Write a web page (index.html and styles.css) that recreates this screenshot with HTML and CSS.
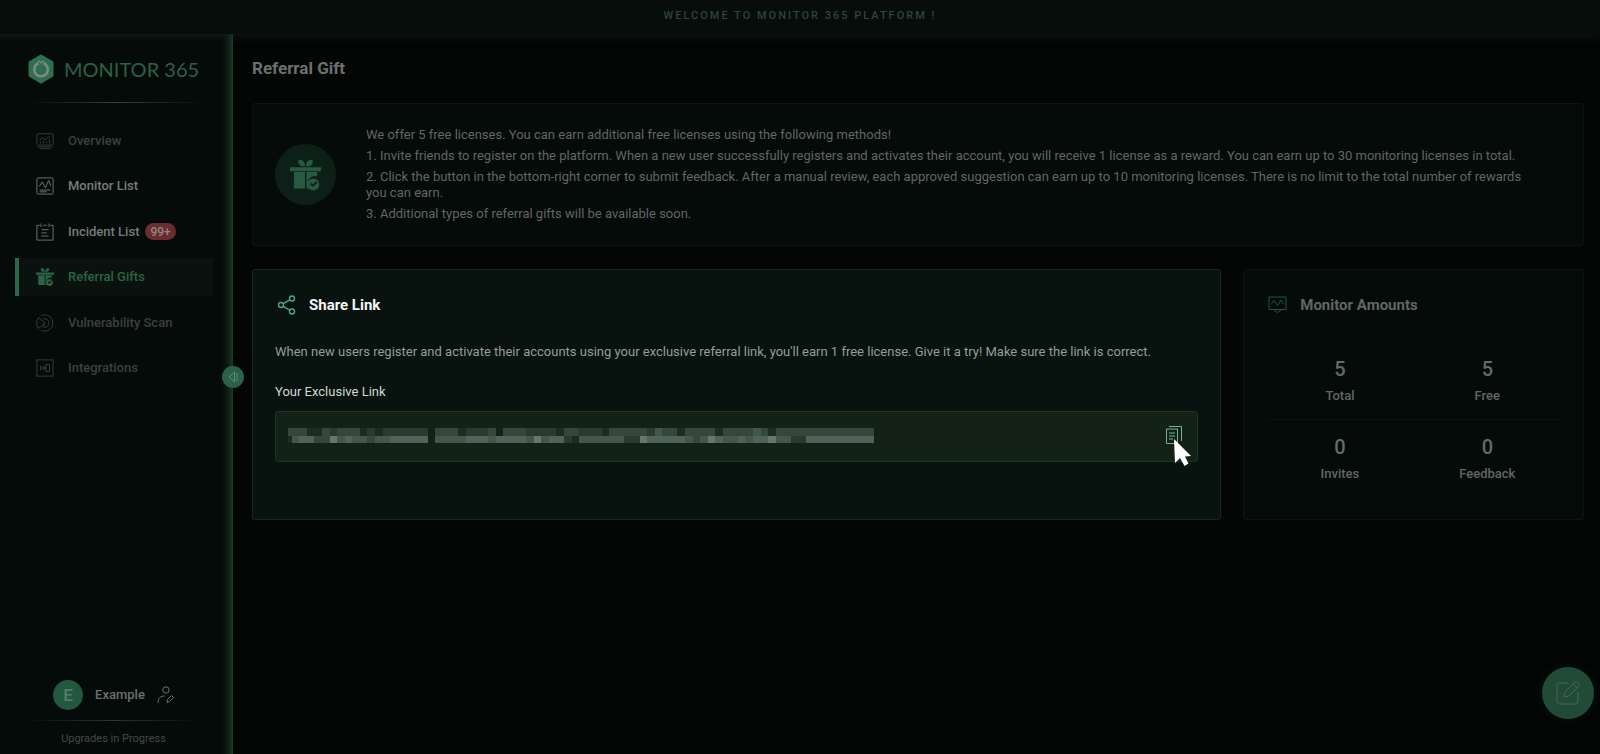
FILE: index.html
```
<!DOCTYPE html>
<html lang="en">
	<head>
		<meta charset="utf-8">
		<title>Monitor 365 - Referral Gift</title>
		<link rel="stylesheet" href="styles.css">
	</head>
	<body>
		<!-- shared icon shapes -->
		<svg class="defs" aria-hidden="true">
			<symbol id="gift" viewBox="0 0 32 32">
				<path d="M15.500 7C11 7.500 8 5 8.500 1c4-1.500 7 1 7 6zM16.500 7C21 7.500 24 5 23.500 1c-4-1.500-7 1-7 6z"/>
				<path d="M0 8h32v4H0zM4 13h11.500v17H4zM17 13h11v4.500a7 7 0 0 0-9 9V30h-2z"/>
				<path fill-rule="evenodd" d="M24 19.500a6.200 6.200 0 1 0 .01 0zM20.500 25.500l1.500-1.500 1.700 1.700 3.300-3.300 1.300 1.300-4.600 4.600z"/>
			</symbol>
		</svg>
		<div class="topbar">WELCOME TO MONITOR 365 PLATFORM !</div>
		<div class="page">
			<aside class="sidebar">
				<a class="logo" href="#">
					<svg width="28" height="32" viewBox="0 0 28 32">
						<path fill="#2f6e4f" stroke="#2f6e4f" stroke-width="3" stroke-linejoin="round" d="M14 3l11 6.500v13L14 29 3 22.500v-13z"/>
						<circle cx="14" cy="16.500" r="6.800" fill="none" stroke="#808b84" stroke-width="2.500"/>
						<path stroke="#2f6e4f" stroke-width="2" d="M11 6.500l2 5M17 6.500l-2 5"/>
						<circle cx="12" cy="8.500" r="1" fill="#808b84"/>
						<circle cx="16" cy="8.500" r="1" fill="#808b84"/>
					</svg>
					<span>MONITOR 365</span>
				</a>
				<nav class="menu">
					<a class="off" href="#">
						<svg viewBox="0 0 20 20"><rect x="1" y="2" width="18" height="12.500" rx="1.500"/><path d="M4 9.500l3-3 3 2 5.500-4M5 12.500v-2M8.500 12.500v-3M12 12.500v-2M15 12.500v-5M1.500 16.500h17M4 18.500h12"/></svg>
						<span>Overview</span>
					</a>
					<a href="#">
						<svg viewBox="0 0 20 20"><rect x="1" y="1" width="18" height="18" rx="1.500"/><path d="M3.500 10.500l3.500-5 3.500 6.500 3.500-8 2.500 6M4 14.500h12M4 16.500h8"/></svg>
						<span>Monitor List</span>
					</a>
					<a href="#">
						<svg viewBox="0 0 20 20"><path d="M4 2.500H1v16.500h18v-16.500h-3M8 2.500h4M5.500.5v4M14.500.5v4M6 7.500h8M6 11h6M6 14.500h8"/></svg>
						<span>Incident List</span>
						<b class="badge">99+</b>
					</a>
					<a class="cur" href="#">
						<svg class="solid"><use href="#gift"/></svg>
						<span>Referral Gifts</span>
					</a>
					<a class="off" href="#">
						<svg viewBox="0 0 20 20"><path d="M6 1.800A9 9 0 1 1 6 18.200M3 4a9 9 0 0 0 0 12M3 4l7 6-7 6M8 5.500a4.800 4.800 0 1 1 0 9M10 10l-2 4.500"/></svg>
						<span>Vulnerability Scan</span>
					</a>
					<a class="off" href="#">
						<svg viewBox="0 0 20 20"><rect x="1" y="1" width="18" height="18"/><path d="M11 6h4v8h-4zM5 7.500v5M7 8.500v3M9 7.500v5M7 10h4"/></svg>
						<span>Integrations</span>
					</a>
				</nav>
				<div class="user">
					<div class="who">
						<span class="avatar">E</span>
						<span>Example</span>
						<svg width="17" height="18" viewBox="0 0 17 18"><circle cx="9" cy="4" r="3.200"/><path d="M1 17c0-5 2.500-7 6.500-7M10 16.500l.5-3 4-4 2 2-4 4z"/></svg>
					</div>
					<p>Upgrades in Progress</p>
				</div>
				<button class="toggle" aria-label="Collapse menu">
					<svg width="12" height="12" viewBox="0 0 12 12"><path d="M7.500 1v10L2 6zM10 2v8"/></svg>
				</button>
			</aside>
			<main class="main">
				<h1>Referral Gift</h1>
				<section class="card intro">
					<div class="gift"><svg width="31" height="32"><use href="#gift"/></svg></div>
					<div class="rules">
						<p>We offer 5 free licenses. You can earn additional free licenses using the following methods!</p>
						<p>1. Invite friends to register on the platform. When a new user successfully registers and activates their account, you will receive 1 license as a reward. You can earn up to 30 monitoring licenses in total.</p>
						<p>2. Click the button in the bottom-right corner to submit feedback. After a manual review, each approved suggestion can earn up to 10 monitoring licenses. There is no limit to the total number of rewards you can earn.</p>
						<p>3. Additional types of referral gifts will be available soon.</p>
					</div>
				</section>
				<div class="row">
					<section class="card share">
						<h2>
							<svg viewBox="0 0 22 22"><circle cx="6" cy="11" r="2.500"/><circle cx="17" cy="4.500" r="2.500"/><circle cx="17" cy="17.500" r="2.500"/><path d="M8.200 9.700l6.600-3.900M8.200 12.300l6.600 3.900"/></svg>
							Share Link
						</h2>
						<p>When new users register and activate their accounts using your exclusive referral link, you'll earn 1 free license. Give it a try! Make sure the link is correct.</p>
						<h3>Your Exclusive Link</h3>
						<div class="link">
							<svg class="mosaic" viewBox="0.5 0 77.5 3" preserveAspectRatio="none" shape-rendering="crispEdges">
								<path class="m1" d="M3 .5h2M10 .5h1M12 .5h1M23 .5h4M36 .5h1M42 .5h1M52 .5h1M57 .5h1M64 .5h1M0 1.500h1M38 1.500h1"/>
								<path class="m2" d="M6 .5h1M11 .5h1M13 .5h6M24 .5h3M32 .5h4M39 .5h3M48 .5h1M37 1.500h1M45 1.500h2M67 1.500h2"/>
								<path class="m3" d="M0 .5h3M5 .5h1M7 .5h3M20 .5h3M27 .5h1M29 .5h3M37 .5h2M43 .5h5M50 .5h2M53 .5h4M58 .5h3M61 .5h1M63 .5h1M65 .5h13M4 1.500h2M11 1.500h1M54 1.500h1"/>
								<path class="m4" d="M49 .5h1M62 .5h1M1 1.500h1M7 1.500h1M9 1.500h2M12 1.500h2M20 1.500h4M27 1.500h1M32 1.500h1M34 1.500h1M39 1.500h6M53 1.500h1M55 1.500h1M58 1.500h2M61 1.500h1M65 1.500h2"/>
								<path class="m5" d="M2 1.500h2M8 1.500h1M14 1.500h5M24 1.500h3M28 1.500h4M35 1.500h2M48 1.500h5M57 1.500h1M60 1.500h1M62 1.500h2M69 1.500h9"/>
								<path class="m6" d="M6 1.500h1M33 1.500h1M47 1.500h1M56 1.500h1M64 1.500h1"/>
							</svg>
							<button class="copy" aria-label="Copy link">
								<svg width="18" height="20" viewBox="0 0 18 20"><path d="M1.500 4h11v14.500h-11zM4 1.500h12.500V16M4 8h6M4 11h6M4 14h4"/></svg>
								<svg class="pointer" width="18" height="28" viewBox="0 0 18 28"><path d="M0 0l17 17-6 .5 3.500 7-4 2.500-4.500-8-5 5z"/></svg>
							</button>
						</div>
					</section>
					<section class="card amounts">
						<h2>
							<svg viewBox="0 0 22 22"><path d="M3 3h17v12.500H3zM8.500 15.500c0 3.500 6 3.500 6 0M5.500 10l2.500-3.500 3.500 5L15 6l2.500 4"/></svg>
							Monitor Amounts
						</h2>
						<dl>
							<div><dd>5</dd><dt>Total</dt></div>
							<div><dd>5</dd><dt>Free</dt></div>
							<div><dd>0</dd><dt>Invites</dt></div>
							<div><dd>0</dd><dt>Feedback</dt></div>
						</dl>
					</section>
				</div>
			</main>
		</div>
		<button class="feedback" aria-label="Feedback">
			<svg width="26" height="26" viewBox="0 0 26 26"><path d="M13 3H4.500A2.500 2.500 0 0 0 2 5.500v16A2.500 2.500 0 0 0 4.500 24h16a2.500 2.500 0 0 0 2.500-2.500V12M9 17l1-5L20 2q1-1 2 0l2 2q1 1 0 2L14 16zM18 4l4 4"/></svg>
		</button>
	</body>
</html>
```
FILE: styles.css
```
body,h1,h2,h3,p,dl,dd{
	margin: 0;
}
*{
	box-sizing: border-box;
}
body{
	min-height: 100vh;
	display: flex;
	flex-direction: column;
	background-color: #030605;
	color: #626664;
	font: 13px/16px Roboto, sans-serif;
}
a{
	color: inherit;
	text-decoration: none;
}
button{
	padding: 0;
	border: 0;
	display: flex;
	align-items: center;
	justify-content: center;
	background: none;
	color: inherit;
}
svg{
	flex: none;
	fill: none;
	stroke: currentColor;
}
.defs{
	position: absolute;
	width: 0;
	height: 0;
}
.topbar{
	height: 34px;
	line-height: 32px;
	background-color: #060d0a;
	box-shadow: 0 1px 10px #121a16;
	color: #2c4638;
	font-size: 11px;
	font-weight: 500;
	letter-spacing: 2px;
	text-align: center;
}
.page{
	flex: 1;
	display: flex;
}
/* sidebar */
.sidebar{
	width: 233px;
	flex: none;
	position: relative;
	display: flex;
	flex-direction: column;
	background: linear-gradient(to left, #1c3f2e, #142e22 2px, #0a1a12 6px, #050b09 11px);
	box-shadow: inset 0 10px 10px -10px #1a2420;
}
.logo{
	height: 69px;
	margin: 0 27px;
	display: flex;
	align-items: center;
	gap: 9px;
	background: linear-gradient(to right, transparent, #34423b, transparent) bottom / 100% 1px no-repeat;
	color: #2c6047;
	font: 20px/32px Lato, sans-serif;
	white-space: nowrap;
}
.logo svg{
	stroke: none;
}
.menu{
	height: 265px;
	margin: 19px 20px 0 15px;
	display: grid;
	align-content: space-between;
}
.menu a{
	height: 38px;
	padding-left: 17px;
	display: flex;
	align-items: center;
	border-left: 4px solid transparent;
	color: #777b79;
	font-weight: 500;
}
.menu svg{
	width: 18px;
	height: 18px;
	margin-right: 14px;
}
.menu .solid{
	fill: currentColor;
	stroke: none;
}
.menu .off{
	color: #3c403e;
}
.menu .cur{
	border-color: #2c684a;
	background-color: #09120e;
	color: #2c6347;
}
.badge{
	height: 17px;
	margin-left: 6px;
	padding: 0 5px;
	border-radius: 9px;
	background-color: #6b2c2f;
	color: #8f8584;
	font-size: 12px;
	font-weight: 500;
	line-height: 18px;
}
.user{
	margin: auto 30px 7px 24px;
	text-align: center;
	font-size: 11px;
	color: #444846;
}
.who{
	padding-bottom: 11px;
	margin-bottom: 10px;
	display: flex;
	align-items: center;
	justify-content: center;
	gap: 12px;
	background: linear-gradient(to right, transparent, #2b3631, transparent) bottom / 100% 1px no-repeat;
	color: #6c706e;
	font-size: 13px;
	font-weight: 500;
}
.avatar{
	width: 30px;
	height: 30px;
	border-radius: 50%;
	background-color: #235840;
	color: #5f7a6c;
	font-size: 17px;
	line-height: 30px;
}
.toggle{
	width: 22px;
	height: 22px;
	position: absolute;
	top: 332px;
	right: -11px;
	border-radius: 50%;
	background-color: #2a6247;
	color: #5d8b74;
}
/* content */
.main{
	flex: 1;
	min-width: 0;
	padding: 24px 16px 24px 19px;
}
h1{
	margin-bottom: 25px;
	color: #6c706e;
	font-size: 17px;
	font-weight: 700;
	line-height: 20px;
}
.card{
	padding: 23px 22px;
	border: 1px solid #0d1512;
	border-radius: 3px;
	background-color: #050b09;
}
.intro{
	margin-bottom: 23px;
	padding-right: 54px;
	display: flex;
	align-items: center;
	gap: 30px;
}
.gift{
	width: 61px;
	height: 61px;
	flex: none;
	display: flex;
	align-items: center;
	justify-content: center;
	border-radius: 50%;
	background-color: #0d2018;
	color: #275a41;
}
.gift svg{
	fill: currentColor;
	stroke: none;
}
.rules{
	display: grid;
	gap: 5px;
}
.row{
	display: grid;
	grid-template-columns: 970fr 341fr;
	gap: 22px;
}
.row .card{
	min-height: 251px;
}
h2{
	margin-bottom: 27px;
	display: flex;
	align-items: center;
	gap: 12px;
	font-size: 15px;
	font-weight: 700;
	line-height: 24px;
}
h2 svg{
	width: 22px;
	height: 22px;
	color: #23583f;
}
.row .share{
	border-color: #15291f;
	background-color: #08120e;
	color: #969d99;
}
.share h2{
	color: #f4f7f5;
}
.share h2 svg{
	color: #56a37b;
	stroke-width: 1.4;
}
.share h3{
	margin: 24px 0 11px;
	color: #d0d8d3;
	font-size: 13px;
	font-weight: 400;
}
.link{
	height: 51px;
	padding: 0 14px 0 12px;
	display: flex;
	align-items: center;
	justify-content: space-between;
	border: 1px solid #1d3526;
	border-radius: 3px;
	background-color: #142116;
}
.mosaic{
	width: 586px;
	height: 23px;
	margin-top: 6px;
}
.mosaic path{
	stroke-width: 1;
}
.m1{ stroke: #1c2c20; }
.m2{ stroke: #2a3a2e; }
.m3{ stroke: #35463a; }
.m4{ stroke: #43574a; }
.m5{ stroke: #506358; }
.m6{ stroke: #64786b; }
.copy{
	position: relative;
	margin-bottom: 3px;
	color: #6fb592;
}
.pointer{
	position: absolute;
	left: 9px;
	top: 14px;
	fill: #fff;
	stroke: none;
}
.amounts dl{
	padding-top: 13px;
	display: grid;
	grid-template-columns: 1fr 1fr;
	text-align: center;
}
.amounts dl div{
	padding-bottom: 15px;
	display: flex;
	flex-direction: column;
	gap: 9px;
}
.amounts dl div:nth-child(n+3){
	padding: 15px 0 0;
	border-top: 1px solid #0c1411;
}
dd{
	color: #666a68;
	font-size: 20px;
	font-weight: 500;
	line-height: 24px;
	margin-bottom: -2px;
}
dt{
	font-weight: 500;
}
.feedback{
	width: 52px;
	height: 52px;
	position: fixed;
	right: 6px;
	bottom: 35px;
	border-radius: 50%;
	background-color: #214b36;
	box-shadow: 0 0 8px #08140e;
	color: #486456;
}
```
